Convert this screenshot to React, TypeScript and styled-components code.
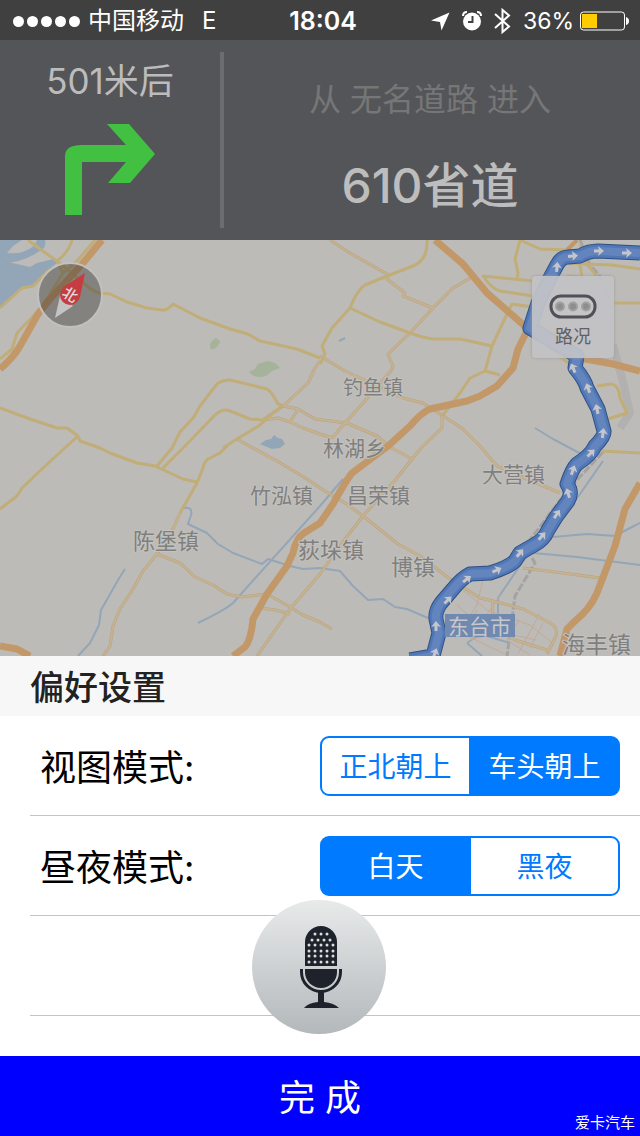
import React, { useState } from "react";
import styled, { createGlobalStyle } from "styled-components";

const GlobalStyle = createGlobalStyle`
  *, *::before, *::after { box-sizing: border-box; }
  body {
    margin: 0;
    background: #fff;
    font-family: Inter, "Noto Sans CJK SC", sans-serif;
  }
  button { font: inherit; border: 0; padding: 0; cursor: pointer; }
`;

const Screen = styled.div`
  display: flex;
  flex-direction: column;
  min-height: 100vh;
`;

/* Status bar */

const StatusBar = styled.header`
  display: grid;
  grid-template-columns: 1fr auto 1fr;
  align-items: center;
  height: 40px;
  padding: 1px 11px 0 13px;
  background: #404040;
  color: #fff;
  font-size: 24px;
  line-height: 40px;
`;

const StatusGroup = styled.div<{ $end?: boolean }>`
  display: flex;
  align-items: center;
  justify-content: ${(p) => (p.$end ? "flex-end" : "flex-start")};
  white-space: nowrap;
`;

const Signal = styled.div`
  display: flex;
  gap: 3px;
  margin-right: 8px;
`;

const Dot = styled.span`
  width: 11px;
  height: 11px;
  border-radius: 50%;
  background: #fff;
`;

const Network = styled.span`
  margin-left: 18px;
`;

const Clock = styled.time`
  padding-left: 4px;
  font-size: 25px;
  font-weight: 600;
`;

const StatusIcon = styled.svg`
  display: block;
  margin-right: 12px;
`;

const Charge = styled.span`
  font-size: 23px;
`;

const BatteryIcon = styled.svg`
  display: block;
  margin-left: 6px;
`;

/* Guidance */

const Guidance = styled.section`
  display: flex;
  height: 200px;
  padding: 12px 0;
  background: #545559;
`;

const Turn = styled.div`
  display: flex;
  flex-direction: column;
  align-items: center;
  width: 220px;
  color: #bcbcbc;
  font-size: 35px;
  line-height: 58px;
`;

const TurnIcon = styled.svg`
  display: block;
  margin-top: 13px;
`;

const Road = styled.div`
  display: flex;
  flex: 1;
  flex-direction: column;
  align-items: center;
  padding: 24px 4px 0 0;
  border-left: 4px solid #6c6d71;
`;

const RoadFrom = styled.div`
  color: #767676;
  font-size: 32px;
  line-height: 48px;
`;

const RoadName = styled.div`
  margin-top: 26px;
  color: #bdbdbd;
  font-size: 48px;
  font-weight: 500;
  line-height: 72px;
`;

/* Map */

const MapArea = styled.main`
  position: relative;
  flex: 1;
  min-height: 416px;
  overflow: hidden;
  background: #bdbbb7;
`;

const MapCanvas = styled.svg`
  display: block;
  width: 100%;
  min-height: 416px;
`;

const TownName = styled.text<{ $city?: boolean }>`
  fill: ${(p) => (p.$city ? "#c8c8c8" : "#7f7f7f")};
  stroke: ${(p) => (p.$city ? "none" : "#c4c2be")};
  stroke-width: 2px;
  paint-order: stroke;
  font-family: "Noto Sans CJK SC", sans-serif;
`;

const Compass = styled.button`
  position: absolute;
  left: 37px;
  top: 22px;
  width: 66px;
  height: 66px;
  border-radius: 50%;
  border: 2px solid #c2c1bf;
  background: rgba(40, 38, 36, 0.38);
  svg { display: block; }
`;

const CompassMark = styled.span`
  position: absolute;
  left: 23px;
  top: 23px;
  width: 16px;
  color: #ddd;
  font-size: 15px;
  font-weight: 500;
  line-height: 16px;
  transform: rotate(32deg);
`;

const TrafficButton = styled.button`
  position: absolute;
  right: 26px;
  top: 36px;
  display: flex;
  flex-direction: column;
  align-items: center;
  width: 82px;
  height: 82px;
  padding-top: 18px;
  border-radius: 4px;
  background: rgba(194, 195, 198, 0.93);
  box-shadow: 0 0 3px #999;
  color: #606165;
  font-size: 18px;
  line-height: 24px;
`;

const TrafficLabel = styled.span`
  margin-top: 6px;
`;

/* Settings */

const Settings = styled.section`
  position: relative;
  padding-bottom: 40px;
  background: #fff;
`;

const SettingsTitle = styled.h1`
  margin: 0;
  padding: 4px 30px 0;
  background: #f7f7f7;
  color: #222;
  font-size: 34px;
  font-weight: 500;
  line-height: 56px;
`;

const SettingRow = styled.fieldset`
  display: flex;
  align-items: center;
  justify-content: space-between;
  height: 100px;
  margin: 0 0 0 30px;
  padding: 0 20px 0 10px;
  border: 0;
  border-bottom: 1px solid #c4c4c6;
`;

const SettingName = styled.span`
  padding-top: 4px;
  color: #000;
  font-size: 36px;
  line-height: 54px;
`;

const Segments = styled.div`
  display: flex;
  width: 300px;
  height: 60px;
  overflow: hidden;
  border: 2px solid #007aff;
  border-radius: 9px;
  background: #007aff;
`;

const Segment = styled.label<{ $on: boolean }>`
  display: flex;
  flex: 1;
  align-items: center;
  justify-content: center;
  padding-top: 2px;
  background: ${(p) => (p.$on ? "#007aff" : "#fff")};
  color: ${(p) => (p.$on ? "#fff" : "#007aff")};
  font-size: 28px;
  line-height: 56px;
  cursor: pointer;
  &:first-child { border-right: 2px solid #007aff; }
`;

const Radio = styled.input`
  position: absolute;
  opacity: 0;
  pointer-events: none;
`;

const VoiceButton = styled.button`
  position: absolute;
  left: 50%;
  bottom: 22px;
  width: 134px;
  height: 134px;
  margin-left: -68px;
  border-radius: 50%;
  background: linear-gradient(#e8eaea, #b3b8bb);
  svg { display: block; }
`;

const Done = styled.footer`
  position: relative;
  background: #0000fe;
  color: #fff;
`;

const DoneButton = styled.button`
  display: block;
  width: 100%;
  height: 80px;
  padding-top: 4px;
  background: none;
  color: inherit;
  font-size: 36px;
  line-height: 76px;
`;

const Credit = styled.small`
  position: absolute;
  right: 5px;
  bottom: 3px;
  font-family: "Noto Sans CJK SC", sans-serif;
  font-size: 15px;
  line-height: 22px;
`;

const yellowRoads = [
  "M28 0L40 9L57 21L67 29L87 46Q94 52 100 53L110 54L127 62L147 68L162 70Q167 71 173 64L200 78L230 89L248 94L260 101L297 109L320 118",
  "M72 0Q69 12 57 21L63 33",
  "M95 0L77 21L63 33L50 54L40 69L17 93L12 109L0 119",
  "M0 68L22 48L33 46L50 29",
  "M157 226L172 208L180 192L193 178L200 166L217 144Q222 140 230 140L267 149Q272 152 278 164L283 166",
  "M163 228L185 206L215 175Q223 168 230 171L250 179L263 180",
  "M223 208L237 199L260 185L273 173L283 166",
  "M227 206L220 213L208 219Q204 222 203 228L197 243L180 273",
  "M0 168L30 179L57 188L67 188L78 196L80 201L100 208L110 213L137 223L155 226L183 239L197 242",
  "M78 196L67 206L43 228L22 248L17 256L0 269",
  "M427 0Q428 20 413 26L387 36L365 45Q357 50 350 68L332 88L322 106L325 114L320 124",
  "M350 68L380 82L410 93Q424 98 433 99L460 99L492 106",
  "M532 67L512 64L507 74L492 106L485 131L500 135",
  "M485 131L470 138L460 153L442 176",
  "M533 56L500 51Q492 49 483 36L513 39L533 41",
  "M520 0L515 19L518 33L517 39",
  "M520 0L540 9L567 10L577 0",
  "M565 23L587 24L612 25L640 29",
  "M580 5L587 24L600 40M580 24L582 37M567 36L582 37",
  "M613 63L640 63M550 110L570 124M602 211L640 213",
  "M597 146L611 144Q619 145 620 158L627 173L608 179",
];

const tanRoads = [
  "M180 273L173 289L165 303L157 314L143 331L133 349L120 369L113 386L110 406L103 416",
  "M157 314L180 323L195 337L213 345L227 354L242 357L267 354L290 367L303 375L320 382L332 389",
  "M260 368L276 370L290 374",
  "M263 180L283 166L308 143L315 128L320 121",
  "M283 166L298 169L315 179L347 183L377 196L390 207L412 219",
  "M263 180L278 178L290 182L303 188L320 194L332 198M298 169L290 182",
  "M332 198L345 183L363 163L390 132Q395 126 391 122L388 114L410 93L433 68L453 48L472 37",
  "M237 199L253 208L277 221L307 239L320 248L345 263L363 276L398 304L420 316L450 339L480 358L493 361L523 369L550 383Q558 387 556 396L547 414",
  "M330 0L350 13L387 34L387 39L405 53L403 56L433 68",
  "M320 116L345 131L380 147L403 158L423 163L443 176L463 189L480 206L497 226L520 236L560 253",
  "M442 176L442 188L423 206L412 219L397 238L363 276L345 299L320 334L290 369L257 416",
  "M523 328L563 333L600 338M493 361L492 385L515 400L547 410",
];

const cityStreets =
  "M483 340L477 365L455 398M463 350L487 370L530 385L551 402M540 373L518 414M457 365L480 385M477 370L463 394L505 414M519 380L507 400L530 415M500 355L482 382M543 383L530 408M470 400L500 392L536 400";

const highways = [
  "M102 0L83 23L50 59L38 74L20 106Q14 117 0 129",
  "M435 0L463 24L487 53L527 88L580 118L613 124L640 131",
  "M527 91L518 109L513 128L497 146L480 156L467 161L430 169Q422 172 410 186L388 206L352 233Q345 242 333 264L320 283L304 293Q296 298 293 313L287 326L267 354L253 379Q251 400 245 407L233 416",
  "M640 243L625 269L615 306L597 353Q590 369 575 381L567 389L560 416",
  "M0 406L17 409L30 416",
];

const rivers = [
  "M183 268Q193 266 191 275L188 284L207 293L218 304L233 313L262 324L268 319L290 326L303 329L320 328L340 331L353 346L368 360L383 359L395 367L407 369L428 378",
  "M343 239L320 266L233 363Q225 370 198 383",
  "M125 329L118 340L113 349L101 370L99 385L90 403L78 416",
  "M603 221L580 254L547 297L523 321L498 358L498 393",
  "M553 297L587 294L615 296L630 288L640 283M533 313L577 317L640 325",
  "M535 188L553 199L570 208L585 216M339 101L345 98",
  "M467 403L480 394L510 403M467 403L482 416",
];

const route =
  "M640 13L598 11Q588 11 580 16L568 17Q561 17 557 25L550 38L538 63L530 88L577 116L575 128Q585 140 587 148L598 169L604 191Q605 196 595 206Q591 215 577 224Q572 229 567 244Q573 252 568 261L556 277L548 290Q544 300 534 305L520 313L515 321Q509 327 490 333L470 334Q462 338 453 349L441 363Q435 371 436 379L439 393L433 416L410 420";

const arrows: [number, number, number][] = [
  [557, 27, 5], [573, 16, 85], [599, 11, 90], [627, 13, 90], [573, 128, -25],
  [588, 148, -20], [597, 169, -12], [603, 193, 8], [591, 213, 45], [573, 230, 20],
  [568, 253, -18], [557, 274, 35], [542, 296, 42], [520, 313, 40], [497, 330, 65],
  [467, 339, 52], [448, 360, 45], [436, 386, 0], [435, 413, 20],
];

const towns = [
  { name: "钓鱼镇", x: 343, y: 155, size: 20 },
  { name: "林湖乡", x: 323, y: 216, size: 21 },
  { name: "大营镇", x: 482, y: 242, size: 21 },
  { name: "竹泓镇", x: 250, y: 263, size: 21 },
  { name: "昌荣镇", x: 347, y: 263, size: 21 },
  { name: "陈堡镇", x: 133, y: 309, size: 22 },
  { name: "荻垛镇", x: 298, y: 318, size: 22 },
  { name: "博镇", x: 391, y: 335, size: 22 },
  { name: "东台市", x: 448, y: 394, size: 21, city: true },
  { name: "海丰镇", x: 562, y: 413, size: 23 },
];

const micDots: number[][] = [
  [315, 321, 327], [312, 318, 324, 330],
  [309, 315, 321, 327, 333], [309, 315, 321, 327, 333],
  [309, 315, 321, 327, 333], [309, 315, 321, 327, 333],
].map((row) => row.map((x) => x - 252));
const micRows = [34, 40, 45, 51, 56, 62];

function MapView() {
  return (
    <MapArea>
      <MapCanvas viewBox="0 0 640 416" preserveAspectRatio="xMidYMid slice" fill="none" strokeLinejoin="round">
        <g fill="#93a6b8">
          <path d="M0 24L8 22L30 27L37 23L53 19L58 22L38 39L33 46L20 48L0 69Z" />
          <path d="M0 0H22L13 6L7 13Q22 15 34 6L37 0H45Q47 9 38 12Q24 22 0 24V15Z" />
          <path d="M260 204L266 200L271 199L274 195L278 198L282 199L285 204L280 208L272 209Z" />
        </g>
        <g fill="#a4b39a">
          <path d="M210 106Q210 101 216 98L220 101Q220 105 214 109Q210 110 210 106Z" />
          <path d="M249 132L255 129L258 124L268 121Q276 122 280 128L272 131L266 136Q254 139 249 132Z" />
        </g>
        <g stroke="#93a6b8" strokeWidth="2">{rivers.map((d) => <path key={d} d={d} />)}</g>
        <path d="M532 318L535 323L515 356L507 416M603 212L577 240L560 260L530 300M580 0L590 25L605 42L613 80" stroke="#a4a3a2" strokeWidth="3" strokeDasharray="8 2" />
        <path d="M613 105L623 142L630 173L620 188" stroke="#a9a8a7" strokeWidth="8" opacity="0.5" />
        <path d={cityStreets} stroke="#c1aa96" strokeWidth="1" />
        <g stroke="#b8a284" strokeWidth="3">{tanRoads.map((d) => <path key={d} d={d} />)}</g>
        <g stroke="#c5b28e" strokeWidth="2">{tanRoads.map((d) => <path key={d} d={d} />)}</g>
        <g stroke="#c1ad78" strokeWidth="3">{yellowRoads.map((d) => <path key={d} d={d} />)}</g>
        <path d="M567 10L577 0" stroke="#c0966b" strokeWidth="4" />
        <g stroke="#c39869" strokeWidth="7">{highways.map((d) => <path key={d} d={d} />)}</g>
        <path d={route} stroke="#334f80" strokeWidth="15" />
        <path d={route} stroke="#4f78b8" strokeWidth="13" />
        <path d={route} stroke="#6484bd" strokeWidth="8" />
        {arrows.map(([x, y, turn]) => (
          <path key={`${x}-${y}`} d="M0 -5L5 1L1.500 0V5H-1.500V0L-5 1Z" fill="#c4c6ca" transform={`translate(${x} ${y}) rotate(${turn})`} />
        ))}
        <rect x="445" y="374" width="70" height="23" fill="#7089b0" />
        {towns.map((t) => (
          <TownName key={t.name} x={t.x} y={t.y} fontSize={t.size} $city={t.city}>{t.name}</TownName>
        ))}
      </MapCanvas>
      <Compass aria-label="指北">
        <svg width="62" height="62" viewBox="0 0 62 62">
          <path d="M46 9L41 33L23 24Z" fill="#c73c40" />
          <path d="M16 54L21 32L34 42Z" fill="#c3c3c3" />
          <circle cx="31" cy="31" r="10" fill="#c73c40" />
        </svg>
        <CompassMark>北</CompassMark>
      </Compass>
      <TrafficButton>
        <svg width="48" height="25" viewBox="0 0 48 25">
          <rect x="2" y="2" width="44" height="21" rx="10" fill="#c5c5c7" stroke="#505157" strokeWidth="3" />
          {[11, 24, 37].map((x) => <circle key={x} cx={x} cy="12.5" r="4" fill="#8e8e8e" stroke="#a0a0a0" strokeWidth="2" />)}
        </svg>
        <TrafficLabel>路况</TrafficLabel>
      </TrafficButton>
    </MapArea>
  );
}

function Choice(props: { label: string; name: string; options: string[]; initial: number }) {
  const [selected, setSelected] = useState(props.initial);
  return (
    <SettingRow aria-label={props.label}>
      <SettingName>{props.label}:</SettingName>
      <Segments>
        {props.options.map((option, i) => (
          <Segment key={option} $on={i === selected}>
            <Radio type="radio" name={props.name} checked={i === selected} onChange={() => setSelected(i)} />
            {option}
          </Segment>
        ))}
      </Segments>
    </SettingRow>
  );
}

export default function App() {
  return (
    <Screen>
      <GlobalStyle />
      <StatusBar>
        <StatusGroup>
          <Signal>{[0, 1, 2, 3, 4].map((i) => <Dot key={i} />)}</Signal>
          <span>中国移动</span>
          <Network>E</Network>
        </StatusGroup>
        <Clock>18:04</Clock>
        <StatusGroup $end>
          <StatusIcon width="19" height="19" viewBox="0 0 19 19"><path d="M18.5 .5L10.5 18.5L9 10L0 8.500Z" fill="#fff" /></StatusIcon>
          <StatusIcon width="20" height="20" viewBox="0 0 20 20" fill="none">
            <circle cx="10" cy="10.500" r="9" fill="#fff" />
            <path d="M1 5Q1 1 5 1M15 1Q19 1 19 5" stroke="#fff" strokeWidth="2" />
            <path d="M10.500 5V11H6" stroke="#404040" strokeWidth="2" />
          </StatusIcon>
          <StatusIcon width="17" height="28" viewBox="0 0 17 28" fill="none"><path d="M1 7L15 19.500L8.500 25V3L15 8.500L1 21" stroke="#fff" strokeWidth="2" /></StatusIcon>
          <Charge>36%</Charge>
          <BatteryIcon width="49" height="20" viewBox="0 0 49 20">
            <rect x=".5" y="1" width="44" height="18" rx="3" fill="none" stroke="#fff" />
            <rect x="2" y="3" width="15" height="14" fill="#fc0" />
            <path d="M46 6Q49 7 49 10Q49 13 46 14Z" fill="#fff" />
          </BatteryIcon>
        </StatusGroup>
      </StatusBar>
      <Guidance>
        <Turn>
          <span>501米后</span>
          <TurnIcon width="92" height="93" viewBox="0 0 92 93"><path d="M1 92V33Q1 22 18 22H62L43 1H65L91 31L66 60H44L62 39H18V92Z" fill="#42c042" /></TurnIcon>
        </Turn>
        <Road>
          <RoadFrom>从 无名道路 进入</RoadFrom>
          <RoadName>610省道</RoadName>
        </Road>
      </Guidance>
      <MapView />
      <Settings>
        <SettingsTitle>偏好设置</SettingsTitle>
        <Choice label="视图模式" name="view" options={["正北朝上", "车头朝上"]} initial={1} />
        <Choice label="昼夜模式" name="theme" options={["白天", "黑夜"]} initial={0} />
        <SettingRow aria-label="语音" />
        <VoiceButton aria-label="语音">
          <svg width="134" height="134" viewBox="0 0 134 134" fill="#1e222a">
            <path d="M53 66V42A16 16 0 0 1 85 42V66Z" />
            <path d="M53 69H85V72A16 16 0 0 1 53 72Z" />
            <path d="M49.500 69V72A19.500 19.500 0 0 0 88.500 72V69" fill="none" stroke="#1e222a" strokeWidth="3" />
            <path d="M66 92H72V102Q82 103 87 108H52Q56 103 66 102Z" />
            {micDots.map((row, r) => row.map((x) => <circle key={`${r}-${x}`} cx={x} cy={micRows[r]} r="1.500" fill="#dcdede" />))}
          </svg>
        </VoiceButton>
      </Settings>
      <Done>
        <DoneButton>完 成</DoneButton>
        <Credit>爱卡汽车</Credit>
      </Done>
    </Screen>
  );
}
